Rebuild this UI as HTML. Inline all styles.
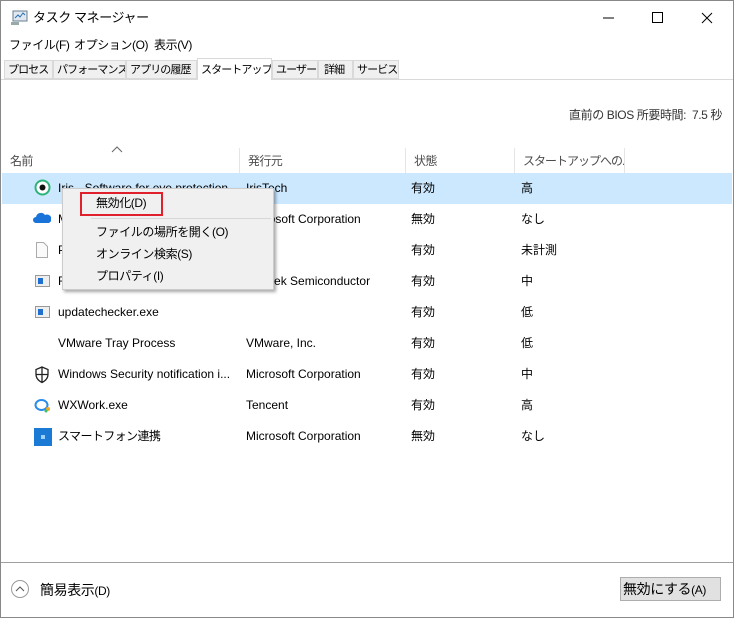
<!DOCTYPE html><html><head><meta charset="utf-8"><style>
*{margin:0;padding:0;box-sizing:border-box;white-space:nowrap}
body{width:734px;height:618px;position:relative;background:#fff;font-family:"Liberation Sans","Noto Sans CJK JP",sans-serif;font-size:12px;line-height:15px;color:#000;overflow:hidden}
.a{position:absolute;white-space:nowrap}
.j{letter-spacing:-0.4px}
.win{position:absolute;left:0;top:0;width:734px;height:618px;border:1px solid #888}
.tab{position:absolute;top:60px;height:19px;background:#f0f0f0;border:1px solid #d9d9d9;padding:2px 0 0 3px;font-size:11px;letter-spacing:-0.9px;overflow:hidden}
.row{position:absolute;left:2px;width:730px;height:31px}
.row span{position:absolute;top:8px;white-space:nowrap;font-size:12px;line-height:15px}
.hd{position:absolute;top:148px;height:25px;border-right:1px solid #e5e5e5;color:#4d4d4d;padding:6px 8px;font-size:12px;overflow:hidden;letter-spacing:-0.6px}
</style></head><body>
<div class="win"></div>
<svg class="a" style="left:10px;top:10px" width="18" height="16"><rect x="3" y="1" width="14" height="10" fill="#dfe8f0" stroke="#6a7c8c"/><polyline points="5,8 8,5 10,7 13,3 15,5" fill="none" stroke="#2a6fb0"/><rect x="1" y="12" width="8" height="3" fill="#9aa"/></svg>
<div class="a j" style="left:33px;top:10px;font-size:13px">タスク マネージャー</div>
<svg class="a" style="left:600px;top:10px" width="120" height="16" stroke="#000" fill="none"><line x1="3" y1="8" x2="14" y2="8"/><rect x="52.5" y="2.5" width="10" height="10"/><path d="M102 3l10 10M112 3l-10 10"/></svg>
<div class="a j" style="left:9px;top:38px">ファイル(F)</div>
<div class="a j" style="left:74px;top:38px">オプション(O)</div>
<div class="a j" style="left:154px;top:38px">表示(V)</div>
<div class="a" style="left:1px;top:79px;width:732px;height:1px;background:#d9d9d9"></div>
<div class="tab" style="left:4px;width:49px">プロセス</div>
<div class="tab" style="left:53px;width:73px">パフォーマンス</div>
<div class="tab" style="left:126px;width:71px">アプリの履歴</div>
<div class="tab" style="left:197px;top:58px;height:22px;width:75px;background:#fff;border-bottom:none;padding-top:4px">スタートアップ</div>
<div class="tab" style="left:272px;width:46px">ユーザー</div>
<div class="tab" style="left:318px;width:35px;padding-left:5px">詳細</div>
<div class="tab" style="left:353px;width:46px">サービス</div>
<div class="a j" style="left:569px;top:108px;color:#333">直前の BIOS 所要時間:&nbsp; 7.5 秒</div>
<svg class="a" style="left:111px;top:145px" width="12" height="8" stroke="#666" fill="none"><path d="M1 7l5-5 5 5"/></svg>
<div class="hd" style="left:2px;width:238px">名前</div>
<div class="hd" style="left:240px;width:166px">発行元</div>
<div class="hd" style="left:406px;width:109px">状態</div>
<div class="hd" style="left:515px;width:110px;letter-spacing:-1px">スタートアップへの...</div>
<div class="row" style="top:173px;background:#cce8ff"><span style="left:56px">Iris - Software for eye protection</span><span style="left:244px">IrisTech</span><span style="left:409px">有効</span><span style="left:519px">高</span></div>
<svg class="a" style="left:34px;top:179px" width="17" height="17"><circle cx="8.5" cy="8.5" r="7" fill="#fff" stroke="#2db37a" stroke-width="2"/><circle cx="8.5" cy="8.5" r="3" fill="#111"/></svg>
<div class="row" style="top:204px"><span style="left:56px">Microsoft OneDrive</span><span style="left:244px">Microsoft Corporation</span><span style="left:409px">無効</span><span style="left:519px">なし</span></div>
<svg class="a" style="left:33px;top:212px" width="18" height="12"><path d="M3 11a3 3 0 010-6 5 5 0 019-2 4 4 0 014 8z" fill="#1a73d9"/></svg>
<div class="row" style="top:235px"><span style="left:56px">Program</span><span style="left:409px">有効</span><span style="left:519px">未計測</span></div>
<svg class="a" style="left:36px;top:242px" width="12" height="16"><path d="M.5 .5h7l4 4v11H.5z" fill="#fafafa" stroke="#aaa"/></svg>
<div class="row" style="top:266px"><span style="left:56px">Realtek HD Audio Manager</span><span style="left:244px">Realtek Semiconductor</span><span style="left:409px">有効</span><span style="left:519px">中</span></div>
<svg class="a" style="left:35px;top:275px" width="15" height="12"><rect x=".5" y=".5" width="14" height="11" fill="#eee" stroke="#999"/><rect x="3" y="3" width="5" height="6" fill="#1e6fd0"/></svg>
<div class="row" style="top:297px"><span style="left:56px">updatechecker.exe</span><span style="left:409px">有効</span><span style="left:519px">低</span></div>
<svg class="a" style="left:35px;top:306px" width="15" height="12"><rect x=".5" y=".5" width="14" height="11" fill="#eee" stroke="#999"/><rect x="3" y="3" width="5" height="6" fill="#1e6fd0"/></svg>
<div class="row" style="top:328px"><span style="left:56px">VMware Tray Process</span><span style="left:244px">VMware, Inc.</span><span style="left:409px">有効</span><span style="left:519px">低</span></div>
<div class="row" style="top:359px"><span style="left:56px">Windows Security notification i...</span><span style="left:244px">Microsoft Corporation</span><span style="left:409px">有効</span><span style="left:519px">中</span></div>
<svg class="a" style="left:34px;top:366px" width="16" height="18" fill="none" stroke="#222" stroke-width="1.3"><path d="M8 1l6 2.5v5c0 4-3 6.5-6 8-3-1.5-6-4-6-8v-5z M8 1v16 M2 8.5h12"/></svg>
<div class="row" style="top:390px"><span style="left:56px">WXWork.exe</span><span style="left:244px">Tencent</span><span style="left:409px">有効</span><span style="left:519px">高</span></div>
<svg class="a" style="left:34px;top:398px" width="17" height="15"><ellipse cx="7.5" cy="7" rx="6" ry="5" fill="none" stroke="#2a8ce8" stroke-width="2"/><circle cx="14" cy="11" r="2" fill="#f5a623"/><circle cx="12" cy="13" r="1.5" fill="#3cc06a"/></svg>
<div class="row" style="top:421px"><span style="left:56px;letter-spacing:-0.6px">スマートフォン連携</span><span style="left:244px">Microsoft Corporation</span><span style="left:409px">無効</span><span style="left:519px">なし</span></div>
<div class="a" style="left:34px;top:428px;width:18px;height:18px;background:#1a7ad4"><div class="a" style="left:7px;top:7px;width:4px;height:4px;background:#9cd0ff"></div></div>
<div class="a" style="left:62px;top:188px;width:212px;height:102px;background:#f0f0f0;border:1px solid #ccc;box-shadow:2px 2px 3px rgba(0,0,0,.35)"></div>
<div class="a" style="left:91px;top:218px;width:180px;height:1px;background:#d7d7d7"></div>
<div class="a" style="left:80px;top:192px;width:83px;height:24px;border:2px solid #e0202a"></div>
<div class="a j" style="left:96px;top:196px">無効化(D)</div>
<div class="a j" style="left:96px;top:225px">ファイルの場所を開く(O)</div>
<div class="a j" style="left:96px;top:247px">オンライン検索(S)</div>
<div class="a j" style="left:96px;top:269px">プロパティ(I)</div>
<div class="a" style="left:1px;top:562px;width:732px;height:1px;background:#a0a0a0"></div>
<svg class="a" style="left:10px;top:579px" width="20" height="20" fill="none" stroke="#999"><circle cx="10" cy="10" r="8.5"/><path d="M6 12l4-4 4 4" stroke="#555"/></svg>
<div class="a j" style="left:40px;top:582px;font-size:14px;line-height:17px">簡易表示<span style="font-size:12px">(D)</span></div>
<div class="a j" style="left:620px;top:577px;width:101px;height:24px;background:#e1e1e1;border:1px solid #adadad;font-size:14px;line-height:18px;padding:2px 2px">無効にする<span style="font-size:12px">(A)</span></div>
</body></html>
